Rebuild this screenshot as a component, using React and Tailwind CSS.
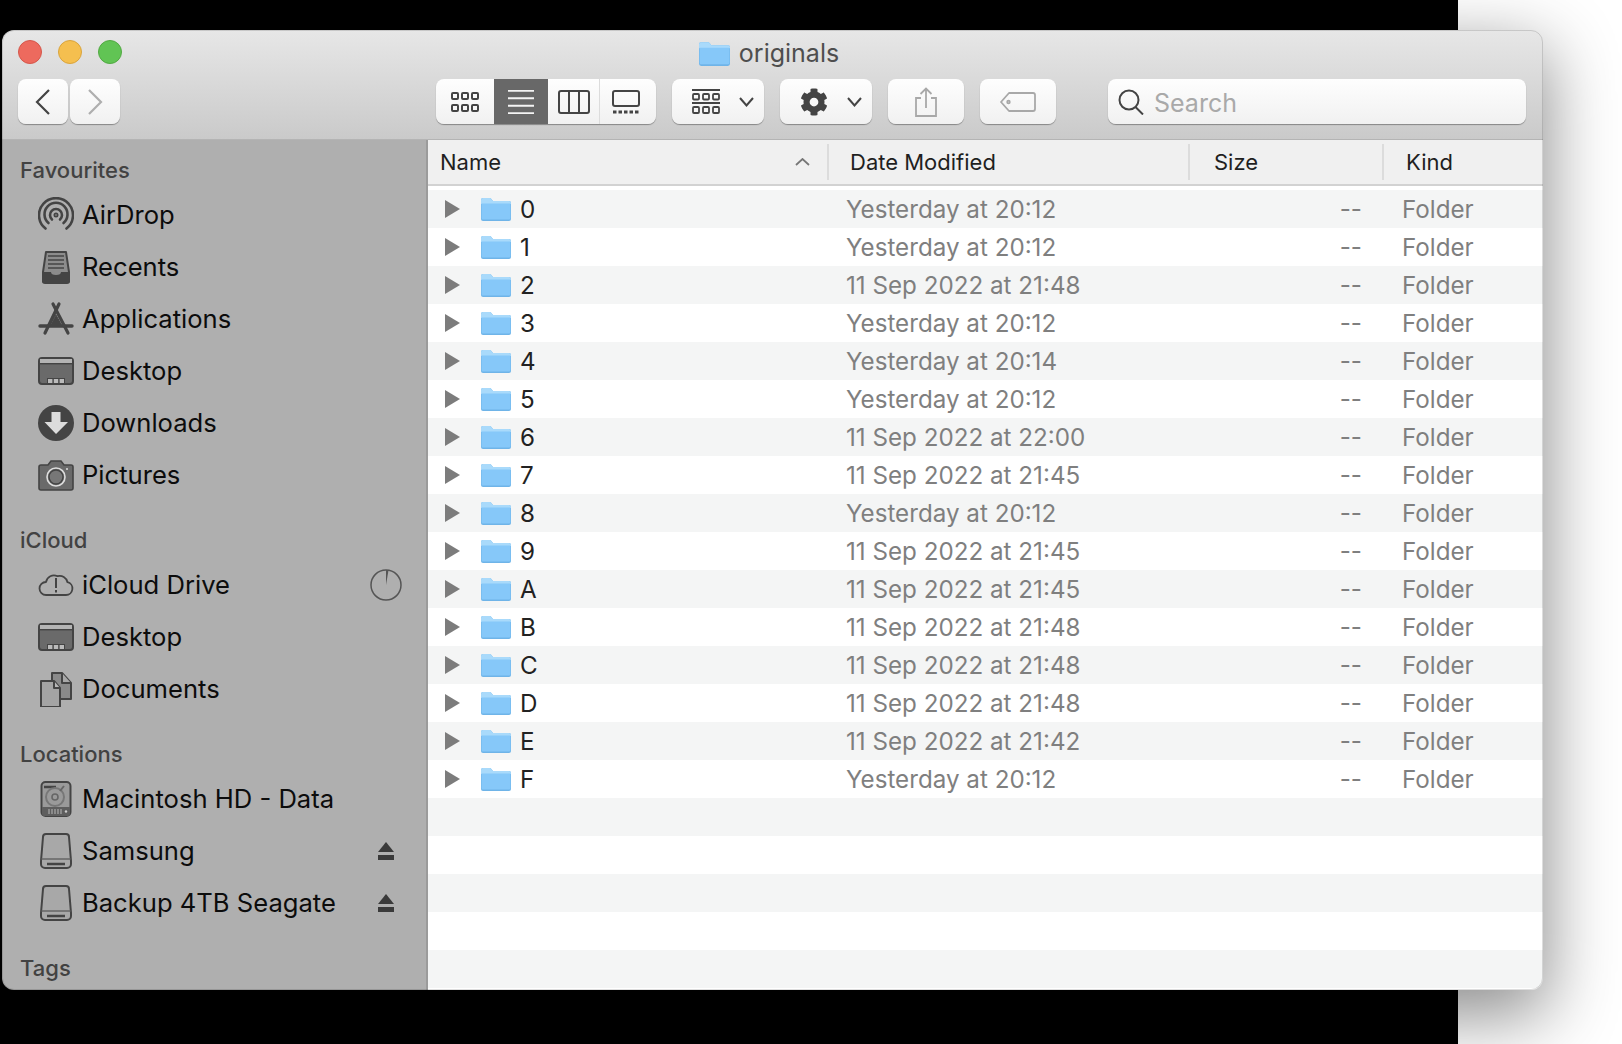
import { FaCog } from 'react-icons/fa';

const font = { fontFamily: 'Inter, "Noto Sans", sans-serif' };

const rows = [
  ['0', 'Yesterday at 20:12'],
  ['1', 'Yesterday at 20:12'],
  ['2', '11 Sep 2022 at 21:48'],
  ['3', 'Yesterday at 20:12'],
  ['4', 'Yesterday at 20:14'],
  ['5', 'Yesterday at 20:12'],
  ['6', '11 Sep 2022 at 22:00'],
  ['7', '11 Sep 2022 at 21:45'],
  ['8', 'Yesterday at 20:12'],
  ['9', '11 Sep 2022 at 21:45'],
  ['A', '11 Sep 2022 at 21:45'],
  ['B', '11 Sep 2022 at 21:48'],
  ['C', '11 Sep 2022 at 21:48'],
  ['D', '11 Sep 2022 at 21:48'],
  ['E', '11 Sep 2022 at 21:42'],
  ['F', 'Yesterday at 20:12'],
];

// Folder icon, used in the title bar and the list
function Folder({ className }) {
  return (
    <svg viewBox="0 0 30 24" className={className}>
      <path d="M0 3a2 2 0 0 1 2-2h7.5l2.5 3h16a2 2 0 0 1 2 2v16a2 2 0 0 1-2 2H2a2 2 0 0 1-2-2z" fill="#6fb4e8" />
      <path d="M0 3a2 2 0 0 1 2-2h7.5l2.5 3h16a2 2 0 0 1 2 2v1H0z" fill="#a9dafb" />
      <path d="M0.5 6.5h29V21a1.5 1.5 0 0 1-1.5 1.5H2A1.5 1.5 0 0 1 0.5 21z" fill="#86c8f9" />
    </svg>
  );
}

function AirDropIcon() {
  return (
    <svg viewBox="0 0 36 36" className="w-9 h-9" fill="none" stroke="#444" strokeWidth="2.6" strokeLinecap="round">
      <path d="M7.5 31.5A17 17 0 1 1 28.5 31.5" />
      <path d="M10.5 26A11.5 11.5 0 1 1 25.5 26" />
      <path d="M14 22.5A6 6 0 1 1 22 22.5" />
      <circle cx="18" cy="18" r="1.6" strokeWidth="1.8" />
    </svg>
  );
}

function RecentsIcon() {
  return (
    <svg viewBox="0 0 36 36" className="w-9 h-9">
      <path d="M8 3h20l3 20v9a2 2 0 0 1-2 2H7a2 2 0 0 1-2-2v-9z" fill="#8c8c8c" stroke="#444" strokeWidth="2" strokeLinejoin="round" />
      <path d="M10 7h16M10 11h16M10 15h16M10 19h16" stroke="#444" strokeWidth="1.6" />
      <path d="M4 23h9a5 3 0 0 0 10 0h9v9a2 2 0 0 1-2 2H6a2 2 0 0 1-2-2z" fill="#444" />
    </svg>
  );
}

function ApplicationsIcon() {
  return (
    <svg viewBox="0 0 36 36" className="w-9 h-9" fill="none" stroke="#444" strokeLinecap="round">
      <path d="M2 25h32" strokeWidth="3.4" />
      <path d="M21 3 7 32" strokeWidth="3.2" />
      <path d="M15 3 30 32" strokeWidth="3.2" />
      <path d="M12 25h12l-6-11z" fill="#444" strokeWidth="1" />
    </svg>
  );
}

function DesktopIcon() {
  return (
    <svg viewBox="0 0 36 36" className="w-9 h-9">
      <rect x="1" y="5" width="34" height="26" rx="3" fill="#6a6a6a" stroke="#444" strokeWidth="2" />
      <rect x="2" y="6" width="32" height="4" fill="#b4b4b4" />
      <rect x="2" y="10" width="32" height="1.4" fill="#444" />
      <rect x="9" y="25" width="18" height="6" fill="#444" />
      <rect x="10" y="26" width="4.4" height="4" fill="#bbb" />
      <rect x="15.8" y="26" width="4.4" height="4" fill="#bbb" />
      <rect x="21.6" y="26" width="4.4" height="4" fill="#bbb" />
    </svg>
  );
}

function DownloadsIcon() {
  return (
    <svg viewBox="0 0 36 36" className="w-9 h-9">
      <circle cx="18" cy="18" r="18" fill="#444" />
      <path d="M13.5 7h9v10H30L18 29 6.5 17h7z" fill="#dcdcdc" />
    </svg>
  );
}

function PicturesIcon() {
  return (
    <svg viewBox="0 0 36 36" className="w-9 h-9">
      <path d="M3 8h7l3-4h10l3 4h7a2 2 0 0 1 2 2v21a2 2 0 0 1-2 2H3a2 2 0 0 1-2-2V10a2 2 0 0 1 2-2z" fill="#6a6a6a" stroke="#444" strokeWidth="1.6" />
      <circle cx="18" cy="20" r="9" fill="#777" stroke="#ddd" strokeWidth="1.6" />
      <circle cx="18" cy="20" r="7" fill="none" stroke="#444" strokeWidth="1.4" />
      <circle cx="29" cy="12" r="1" fill="#ddd" />
    </svg>
  );
}

function CloudIcon() {
  return (
    <svg viewBox="0 0 36 36" className="w-9 h-9" fill="none" stroke="#444" strokeWidth="1.8">
      <path d="M8 28h20a6.500 6.500 0 0 0 1.500-12.800 8 8 0 0 0-10-6A8 8 0 0 0 8 15 6.500 6.500 0 0 0 8 28z" strokeLinejoin="round" />
      <path d="M18 11v10M18 23v2.500" strokeWidth="2" />
    </svg>
  );
}

function DocumentsIcon() {
  return (
    <svg viewBox="0 0 36 36" className="w-9 h-9" stroke="#444" strokeWidth="2" strokeLinejoin="round">
      <path d="M14 2h10l9 10v16H14z" fill="#8a8a8a" />
      <path d="M24 2v10h9" fill="#a8a8a8" />
      <path d="M3 10h13l6 7v19H3z" fill="#a4a4a4" />
      <path d="M16 10v7h6" fill="#b8b8b8" />
    </svg>
  );
}

function DiskIcon() {
  return (
    <svg viewBox="0 0 36 36" className="w-9 h-9">
      <rect x="3.500" y="1" width="29" height="34" rx="4" fill="#9a9a9a" stroke="#444" strokeWidth="2" />
      <path d="M4 26h28v7a2 2 0 0 1-2 2H6a2 2 0 0 1-2-2z" fill="#5e5e5e" />
      <path d="M6 6h12" stroke="#444" strokeWidth="2.500" />
      <circle cx="17" cy="16" r="9" fill="none" stroke="#777" strokeWidth="2" />
      <circle cx="17" cy="16" r="3" fill="none" stroke="#666" strokeWidth="1.600" />
      <path d="M22 10l4-5" stroke="#666" strokeWidth="2" />
      <path d="M11 28v5M14 28v5M17 28v5M20 28v5M23 28v5" stroke="#aaa" strokeWidth="1.200" />
      <circle cx="28" cy="30.500" r="1.200" fill="#ccc" />
    </svg>
  );
}

function DriveIcon() {
  return (
    <svg viewBox="0 0 36 36" className="w-9 h-9">
      <path d="M8 1h20a3 3 0 0 1 3 3l2 24v3a4 4 0 0 1-4 4H7a4 4 0 0 1-4-4v-3L5 4a3 3 0 0 1 3-3z" fill="#a8a8a8" stroke="#444" strokeWidth="2" />
      <path d="M3.500 26h29" stroke="#666" strokeWidth="1.400" />
      <path d="M9 31h18" stroke="#444" strokeWidth="2.400" />
    </svg>
  );
}

function ProgressIcon() {
  return (
    <svg viewBox="0 0 32 32" className="w-8 h-8">
      <circle cx="16" cy="16" r="15" fill="none" stroke="#555" strokeWidth="1.500" />
      <path d="M16 16V1l2.500.2z" fill="#555" />
    </svg>
  );
}

function EjectIcon() {
  return (
    <svg viewBox="0 0 16 18" className="w-4 h-[18px]">
      <path d="M8 0l8 10H0z" fill="#3a3a3a" />
      <rect y="13" width="16" height="5" fill="#3a3a3a" />
    </svg>
  );
}

const sections = [
  {
    title: 'Favourites',
    items: [
      ['AirDrop', <AirDropIcon />],
      ['Recents', <RecentsIcon />],
      ['Applications', <ApplicationsIcon />],
      ['Desktop', <DesktopIcon />],
      ['Downloads', <DownloadsIcon />],
      ['Pictures', <PicturesIcon />],
    ],
  },
  {
    title: 'iCloud',
    items: [
      ['iCloud Drive', <CloudIcon />, <ProgressIcon />],
      ['Desktop', <DesktopIcon />],
      ['Documents', <DocumentsIcon />],
    ],
  },
  {
    title: 'Locations',
    items: [
      ['Macintosh HD - Data', <DiskIcon />],
      ['Samsung', <DriveIcon />, <EjectIcon />],
      ['Backup 4TB Seagate', <DriveIcon />, <EjectIcon />],
    ],
  },
];

function ToolButton({ className = '', children }) {
  return (
    <div className={`h-[45px] flex items-center justify-center rounded-lg bg-gradient-to-b from-[#fefefe] to-[#f1f1f1] shadow-[0_1px_1px_rgba(0,0,0,0.35)] ${className}`}>
      {children}
    </div>
  );
}

function Chevron() {
  return (
    <svg viewBox="0 0 15 10" className="w-[15px] h-[10px]" fill="none" stroke="#444" strokeWidth="2">
      <path d="M1 1l6.500 7.500L14 1" />
    </svg>
  );
}

function Toolbar() {
  return (
    <div className="h-[110px] shrink-0 pl-4 pr-[17px] bg-gradient-to-b from-[#e7e7e7] to-[#cacaca] border-b border-[#b4b4b4]">
      <div className="h-[49px] pt-[10px] grid grid-cols-[1fr_auto_1fr] items-start">
        <div className="flex gap-4">
          <div className="w-6 h-6 rounded-full bg-[#ed6a5e] border border-[#d4574b]" />
          <div className="w-6 h-6 rounded-full bg-[#f5bf4f] border border-[#d9a43d]" />
          <div className="w-6 h-6 rounded-full bg-[#61c454] border border-[#52a943]" />
        </div>
        <div className="flex items-center gap-[9px] h-[26px] -ml-[6px]">
          <Folder className="w-[31px] h-[25px]" />
          <span className="text-[25px] leading-6 text-[#4e4e4e]">originals</span>
        </div>
        <div />
      </div>

      <div className="flex">
        <div className="flex gap-[2px]">
          <ToolButton className="w-[50px]">
            <svg viewBox="0 0 16 28" className="w-4 h-7" fill="none" stroke="#444" strokeWidth="2.200">
              <path d="M14 2L2 14l12 12" />
            </svg>
          </ToolButton>
          <ToolButton className="w-[50px]">
            <svg viewBox="0 0 16 28" className="w-4 h-7" fill="none" stroke="#aeaeae" strokeWidth="2.200">
              <path d="M2 2l12 12L2 26" />
            </svg>
          </ToolButton>
        </div>

        <ToolButton className="ml-[316px] w-[220px] justify-start overflow-hidden">
          <div className="w-[58px] h-full flex items-center justify-center">
            <svg viewBox="0 0 28 22" className="w-7 h-[22px]" fill="none" stroke="#444" strokeWidth="2">
              <rect x="1" y="2" width="6" height="6" rx="1" />
              <rect x="11" y="2" width="6" height="6" rx="1" />
              <rect x="21" y="2" width="6" height="6" rx="1" />
              <rect x="1" y="14" width="6" height="6" rx="1" />
              <rect x="11" y="14" width="6" height="6" rx="1" />
              <rect x="21" y="14" width="6" height="6" rx="1" />
            </svg>
          </div>
          <div className="w-[54px] h-full bg-[#686868] flex items-center justify-center">
            <svg viewBox="0 0 30 28" className="w-7 h-[26px]" stroke="#f4f4f4" strokeWidth="2">
              <path d="M1 2h28M1 10h28M1 18h28M1 26h28" />
            </svg>
          </div>
          <div className="w-[52px] h-full flex items-center justify-center border-r border-[#dcdcdc]">
            <svg viewBox="0 0 32 24" className="w-8 h-6" fill="none" stroke="#444" strokeWidth="2">
              <rect x="1" y="1" width="30" height="22" rx="2" />
              <path d="M11 1v22M21 1v22" />
            </svg>
          </div>
          <div className="flex-1 h-full flex items-center justify-center pr-1">
            <svg viewBox="0 0 28 24" className="w-7 h-6" fill="none" stroke="#444" strokeWidth="2">
              <rect x="1" y="1" width="26" height="15" rx="2" />
              <path d="M1 22h26" strokeWidth="3" strokeDasharray="3.500 2" />
            </svg>
          </div>
        </ToolButton>

        <ToolButton className="ml-4 w-[92px] gap-[19px] pl-[10px]">
          <svg viewBox="0 0 28 26" className="w-7 h-[26px]" fill="none" stroke="#444" strokeWidth="1.800">
            <path d="M0 1h28M0 14h28" strokeWidth="2" />
            <rect x="1" y="5" width="6" height="5.500" rx="1" />
            <rect x="11" y="5" width="6" height="5.500" rx="1" />
            <rect x="21" y="5" width="6" height="5.500" rx="1" />
            <rect x="1" y="18" width="6" height="6" rx="1" />
            <rect x="11" y="18" width="6" height="6" rx="1" />
            <rect x="21" y="18" width="6" height="6" rx="1" />
          </svg>
          <Chevron />
        </ToolButton>

        <ToolButton className="ml-4 w-[92px] gap-[19px] pl-[10px]">
          <FaCog className="w-7 h-7 text-[#444]" />
          <Chevron />
        </ToolButton>

        <ToolButton className="ml-4 w-[76px]">
          <svg viewBox="0 0 24 30" className="w-6 h-[30px]" fill="none" stroke="#a8a8a8" strokeWidth="1.800">
            <path d="M7 11H2v18h20V11h-5" />
            <path d="M12 21V2M6.500 7L12 1.500 17.500 7" />
          </svg>
        </ToolButton>

        <ToolButton className="ml-4 w-[76px]">
          <svg viewBox="0 0 36 20" className="w-9 h-5" fill="none" stroke="#a8a8a8" strokeWidth="1.800">
            <path d="M9 1h24a2 2 0 0 1 2 2v14a2 2 0 0 1-2 2H9L1 10z" strokeLinejoin="round" />
            <circle cx="8.500" cy="10" r="1.300" />
          </svg>
        </ToolButton>

        <ToolButton className="ml-[52px] flex-1 justify-start pl-[10px] gap-[10px]">
          <svg viewBox="0 0 26 26" className="w-[26px] h-[26px]" fill="none" stroke="#444" strokeWidth="2">
            <circle cx="11" cy="11" r="9.500" />
            <path d="M17.500 18L25 25.500" />
          </svg>
          <span className="text-[25px] pt-1 text-[#a9a9a9]">Search</span>
        </ToolButton>
      </div>
    </div>
  );
}

function Sidebar() {
  return (
    <div className="w-[426px] shrink-0 bg-[#afafaf] border-r-2 border-[#9b9b9b] overflow-hidden">
      {sections.map((section, i) => (
        <div key={section.title}>
          <div className={`${i === 0 ? 'pt-4' : 'pt-[25px]'} pb-[5px] pl-[18px] text-[22px] leading-7 font-medium text-[#424242]`}>
            {section.title}
          </div>
          {section.items.map(([label, icon, extra]) => (
            <div key={label} className="h-[52px] pl-9 pr-6 flex items-center gap-2">
              {icon}
              <span className="flex-1 text-[25.6px] text-[#0c0c0c]">{label}</span>
              {extra && <div className="w-8 flex justify-center">{extra}</div>}
            </div>
          ))}
        </div>
      ))}
      <div className="pt-[25px] pb-[5px] pl-[18px] text-[22px] leading-7 font-medium text-[#424242]">Tags</div>
    </div>
  );
}

function HeaderCell({ className = '', children }) {
  return (
    <div className={`my-1 flex items-center border-l-2 border-[#dcdcdc] text-[22px] text-[#1f1f1f] ${className}`}>
      {children}
    </div>
  );
}

function FileList() {
  return (
    <div className="flex-1 bg-white flex flex-col">
      <div className="h-[46px] shrink-0 flex bg-[#f0f0f0] border-b-2 border-[#d2d2d2]">
        <div className="w-[399px] my-1 pl-3 pr-[17px] flex items-center justify-between text-[22px] text-[#1f1f1f]">
          Name
          <svg viewBox="0 0 15 8" className="w-[15px] h-2" fill="none" stroke="#777" strokeWidth="1.800">
            <path d="M1 7l6.500-6L14 7" />
          </svg>
        </div>
        <HeaderCell className="w-[361px] pl-[21px]">Date Modified</HeaderCell>
        <HeaderCell className="w-[194px] pl-6">Size</HeaderCell>
        <HeaderCell className="flex-1 pl-[22px]">Kind</HeaderCell>
      </div>

      <div className="mt-1">
        {rows.map(([name, date], i) => (
          <div key={name} className={`h-[38px] grid grid-cols-[418px_516px_1fr] items-center text-[24.2px] ${i % 2 === 0 ? 'bg-[#f4f5f5]' : 'bg-white'}`}>
            <div className="flex items-center pl-[17px]">
              <svg viewBox="0 0 15 18" className="w-[15px] h-[18px]">
                <path d="M0 0l15 9L0 18z" fill="#7c7c7c" />
              </svg>
              <Folder className="ml-[21px] w-[30px] h-6" />
              <span className="ml-[9px] pt-[2px] text-[#222]">{name}</span>
            </div>
            <div className="pt-[2px] text-[#7f7f7f]">{date}</div>
            <div className="pt-[2px] text-[#7f7f7f] pl-10 flex">
              <span className="-ml-[103px] w-[63px] text-right mr-10">--</span>
              Folder
            </div>
          </div>
        ))}
        {[16, 17, 18, 19, 20].map((i) => (
          <div key={i} className={`h-[38px] ${i % 2 === 0 ? 'bg-[#f4f5f5]' : 'bg-white'}`} />
        ))}
      </div>
    </div>
  );
}

export default function App() {
  return (
    <div className="relative w-[1622px] h-[1044px] flex overflow-hidden" style={font}>
      <div className="w-[1458px] bg-black" />
      <div className="flex-1 bg-white" />
      <div className="absolute left-[2px] top-[30px] w-[1541px] h-[960px] rounded-xl overflow-hidden flex flex-col">
        <Toolbar />
        <div className="flex-1 flex min-h-0">
          <Sidebar />
          <FileList />
        </div>
      </div>
      <div className="absolute left-[2px] top-[30px] w-[1541px] h-[960px] rounded-xl pointer-events-none shadow-[0_22px_70px_4px_rgba(0,0,0,0.45)] border border-[#00000022]" />
    </div>
  );
}
